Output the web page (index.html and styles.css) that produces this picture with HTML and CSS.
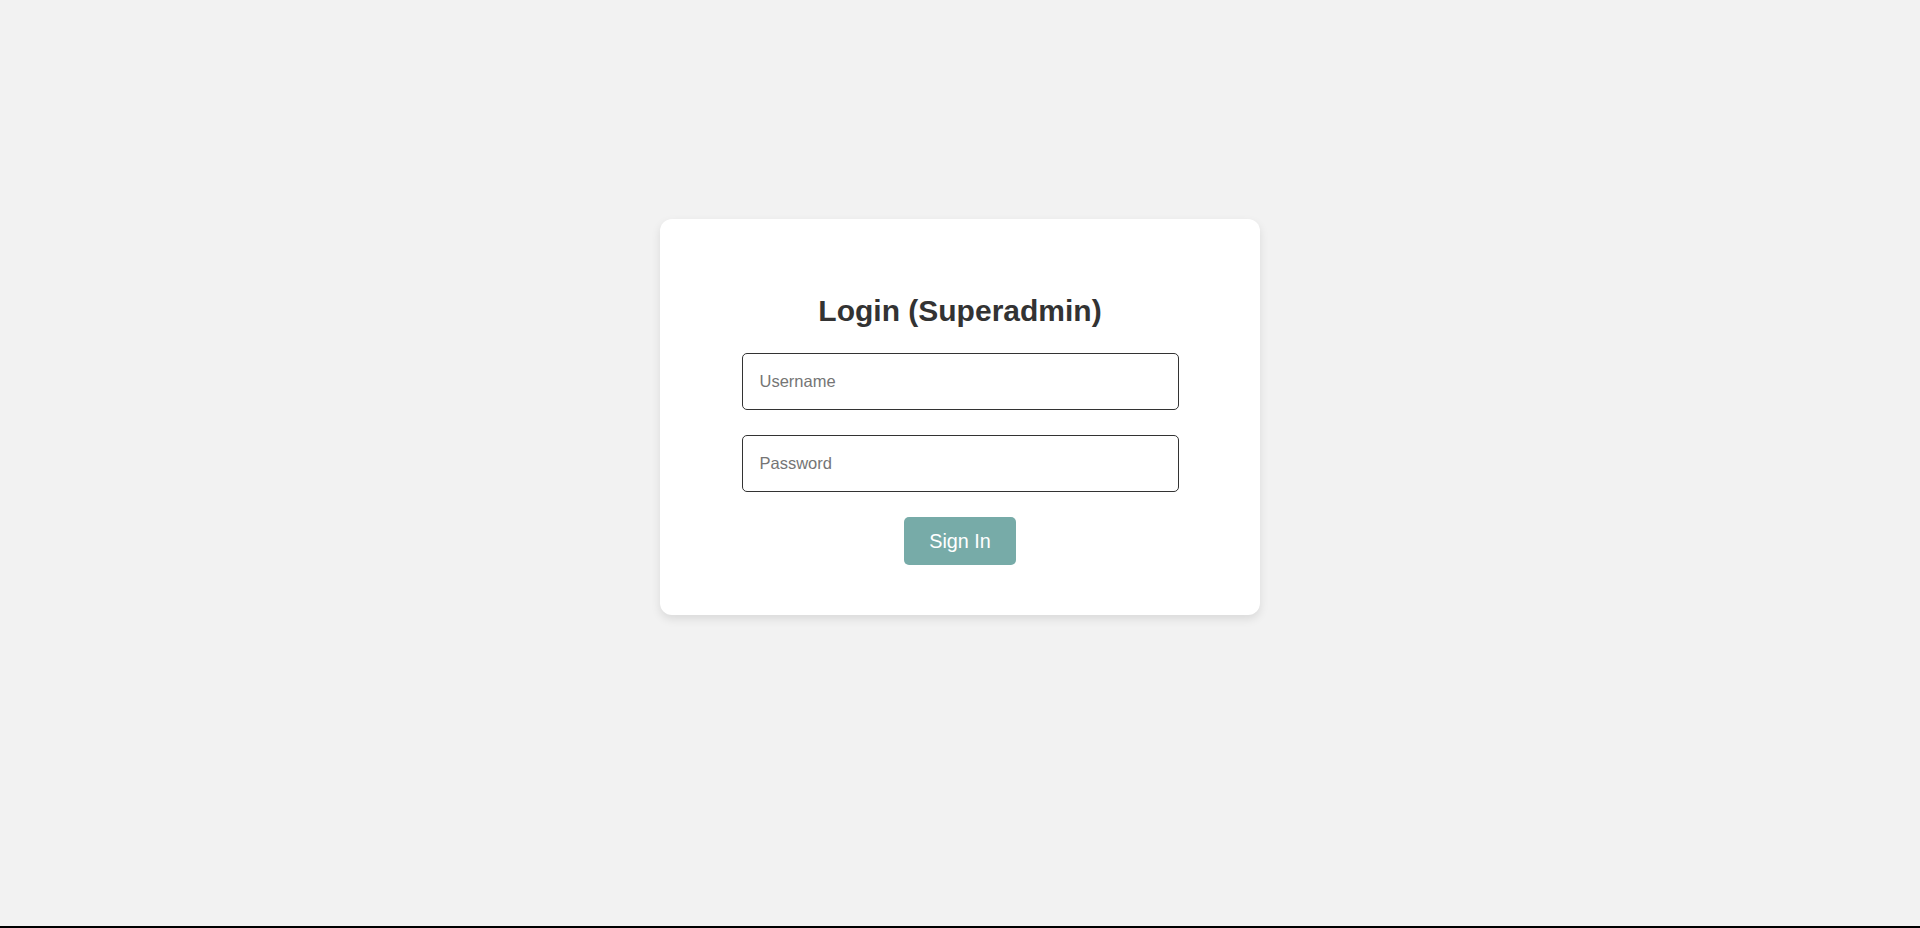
FILE: index.html
```html
<!DOCTYPE html>
<html lang="en">
<head>
<meta charset="utf-8">
<title>Login (Superadmin)</title>
<link rel="stylesheet" href="styles.css">
</head>
<body>
<div class="page">
  <main class="stage">
    <form class="card" onsubmit="return false;">
      <h2 class="title">Login (Superadmin)</h2>
      <input class="field" type="text" placeholder="Username">
      <input class="field" type="password" placeholder="Password">
      <button class="btn" type="submit">Sign In</button>
    </form>
  </main>
  <div class="bottom-line"></div>
</div>
</body>
</html>
```

FILE: styles.css
```css
html, body {
  margin: 0;
  padding: 0;
  height: 100%;
}
body {
  background: #f2f2f2;
  font-family: "Liberation Sans", Arial, sans-serif;
  color: #333;
}
.page {
  min-height: 100vh;
  display: flex;
  flex-direction: column;
}
.stage {
  flex: 1;
  display: flex;
  justify-content: center;
  align-items: flex-start;
  padding-top: 219px;
}
.card {
  width: 600px;
  box-sizing: border-box;
  background: #fff;
  border-radius: 12px;
  box-shadow: 0 4px 10px rgba(0, 0, 0, 0.1);
  padding: 75px 0 50px;
  display: flex;
  flex-direction: column;
  align-items: center;
}
.title {
  margin: 0 0 25px;
  font-size: 30px;
  font-weight: bold;
  color: #333;
  line-height: 34px;
}
.field {
  width: 437px;
  height: 57px;
  box-sizing: border-box;
  border: 1px solid #333;
  border-radius: 5px;
  padding: 0 17px;
  font-family: "Liberation Sans", Arial, sans-serif;
  font-size: 16.5px;
  color: #333;
  background: #fff;
  margin: 0 0 25px;
  outline: none;
}
.field::placeholder {
  color: #757575;
}
.btn {
  width: 112px;
  height: 48px;
  box-sizing: border-box;
  border: none;
  border-radius: 5px;
  background: #77aba8;
  color: #fff;
  font-family: "Liberation Sans", Arial, sans-serif;
  font-size: 19.8px;
  padding: 0;
  cursor: pointer;
}
.bottom-line {
  height: 2px;
  background: #000;
}
```
